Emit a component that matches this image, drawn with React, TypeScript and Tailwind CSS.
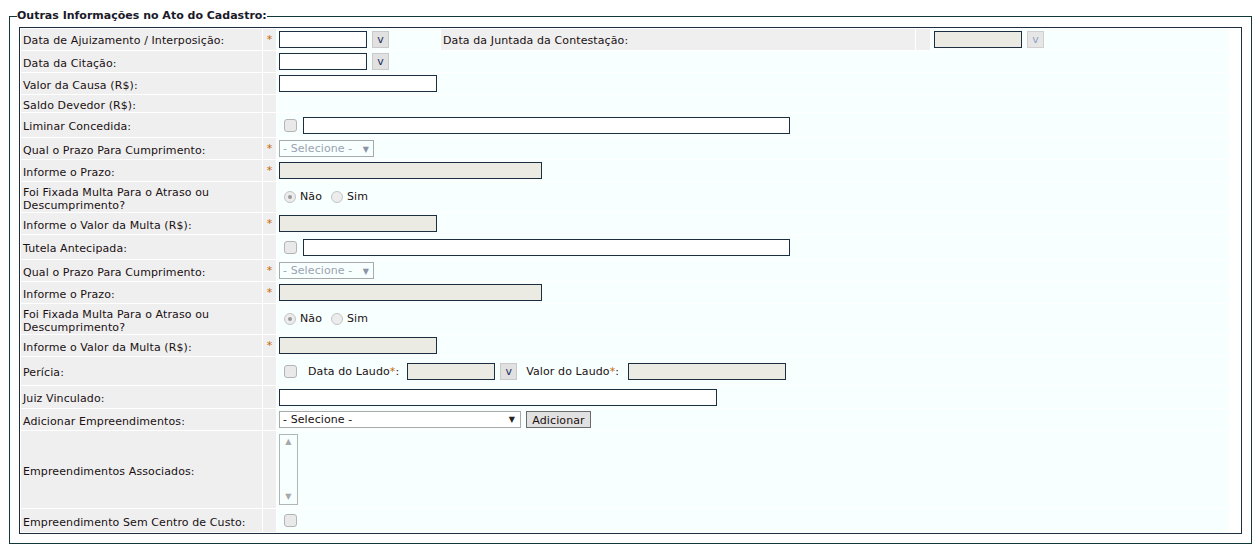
import React from 'react';

const LABEL_BG = 'bg-[#efeff0]';

function Star() {
  return <span className="text-[#c46a00] text-[11px] leading-none">*</span>;
}

function TextBox({ w, disabled }: { w: string; disabled?: boolean }) {
  return (
    <input
      readOnly
      disabled={disabled}
      className={`${w} h-[17px] border border-[#1c2e40] ${disabled ? 'bg-[#ebebe4]' : 'bg-white'} text-[11px] outline-none`}
    />
  );
}

function DateBtn({ disabled }: { disabled?: boolean }) {
  return (
    <button
      type="button"
      className={`ml-[5px] w-[17px] h-[17px] flex items-center justify-center border text-[11px] leading-none ${
        disabled ? 'bg-[#e6e6e6] border-[#d0d0d0] text-[#8fa4c4]' : 'bg-[#e1e1e1] border-[#c9c9c9] text-[#1c2e60]'
      }`}
    >
      v
    </button>
  );
}

function Check() {
  return <span className="block w-[13px] h-[13px] rounded-[3px] border border-[#b4b4b4] bg-[#e9e9e9]" />;
}

function Radio({ checked }: { checked?: boolean }) {
  return (
    <span className="w-[12px] h-[12px] rounded-full border border-[#c4c4c4] bg-[#ececec] flex items-center justify-center">
      {checked && <span className="w-[4px] h-[4px] rounded-full bg-[#9a9a9a]" />}
    </span>
  );
}

function DisabledSelect() {
  return (
    <div className="w-[95px] h-[17px] border border-[#a9a9a9] flex items-center justify-between pl-[3px] pr-[4px] pt-[2px] text-[#9aa3b0] text-[11px]">
      <span>- Selecione -</span>
      <span className="text-[8px] text-[#8a94a4]">▼</span>
    </div>
  );
}

function Row({
  h,
  label,
  req,
  children,
}: {
  h: string;
  label: React.ReactNode;
  req?: boolean;
  children?: React.ReactNode;
}) {
  return (
    <div className={`flex gap-px ${h}`}>
      <div className={`w-[241px] shrink-0 ${LABEL_BG} flex items-center pl-[2px] pt-[3px] leading-[13px]`}>{label}</div>
      <div className={`w-[13px] shrink-0 ${LABEL_BG} flex items-center justify-center`}>{req && <Star />}</div>
      <div className="flex-1 bg-[#f8ffff] flex items-center pl-[2px]">{children}</div>
    </div>
  );
}

function MultaRows() {
  return (
    <>
      <Row h="h-[21px]" label="Qual o Prazo Para Cumprimento:" req>
        <DisabledSelect />
      </Row>
      <Row h="h-[21px]" label="Informe o Prazo:" req>
        <TextBox w="w-[263px]" disabled />
      </Row>
      <Row
        h="h-[30px]"
        label={
          <span>
            Foi Fixada Multa Para o Atraso ou
            <br />
            Descumprimento?
          </span>
        }
      >
        <span className="ml-[5px] flex items-center">
          <Radio checked />
          <span className="ml-[4px]">Não</span>
          <span className="ml-[9px]">
            <Radio />
          </span>
          <span className="ml-[4px]">Sim</span>
        </span>
      </Row>
      <Row h="h-[21px]" label="Informe o Valor da Multa (R$):" req>
        <TextBox w="w-[158px]" disabled />
      </Row>
    </>
  );
}

export default function App() {
  return (
    <div className="bg-white min-h-[553px] pt-[9px] font-['DejaVu_Sans',Verdana,sans-serif] text-[11px] tracking-[0.1px] text-[#201010]">
      <fieldset className="ml-[9px] w-[1243px] border border-[#123838] px-[9px] pb-[9px]">
        <legend className="ml-[-2px] font-bold text-[11px] leading-[14px] tracking-normal text-[#1a1a2a]">
          Outras Informações no Ato do Cadastro:
        </legend>
        <div className="mt-[4px] border border-[#1c2e40] bg-white p-px pr-[12px] flex flex-col gap-px">
          {/* linha 1 */}
          <div className="flex gap-px h-[21px]">
            <div className={`w-[241px] shrink-0 ${LABEL_BG} flex items-center pl-[2px] pt-[3px]`}>
              Data de Ajuizamento / Interposição:
            </div>
            <div className={`w-[13px] shrink-0 ${LABEL_BG} flex items-center justify-center`}>
              <Star />
            </div>
            <div className="w-[163px] shrink-0 bg-[#f8ffff] flex items-center pl-[2px]">
              <TextBox w="w-[88px]" />
              <DateBtn />
            </div>
            <div className={`w-[474px] shrink-0 ${LABEL_BG} flex items-center pl-[2px] pt-[3px]`}>
              Data da Juntada da Contestação:
            </div>
            <div className={`w-[14px] shrink-0 ${LABEL_BG}`} />
            <div className="flex-1 bg-[#f8ffff] flex items-center pl-[3px]">
              <TextBox w="w-[88px]" disabled />
              <DateBtn disabled />
            </div>
          </div>

          <Row h="h-[21px]" label="Data da Citação:">
            <TextBox w="w-[88px]" />
            <DateBtn />
          </Row>
          <Row h="h-[21px]" label="Valor da Causa (R$):">
            <TextBox w="w-[158px]" />
          </Row>
          <Row h="h-[17px]" label="Saldo Devedor (R$):" />
          <Row h="h-[24px]" label="Liminar Concedida:">
            <span className="ml-[5px]">
              <Check />
            </span>
            <span className="ml-[6px] flex">
              <TextBox w="w-[487px]" />
            </span>
          </Row>
          <MultaRows />
          <Row h="h-[24px]" label="Tutela Antecipada:">
            <span className="ml-[5px]">
              <Check />
            </span>
            <span className="ml-[6px] flex">
              <TextBox w="w-[487px]" />
            </span>
          </Row>
          <MultaRows />
          <Row h="h-[28px]" label="Perícia:">
            <span className="ml-[5px]">
              <Check />
            </span>
            <span className="ml-[11px] pt-[2px]">
              Data do Laudo<Star />:
            </span>
            <span className="ml-[8px] flex items-center">
              <TextBox w="w-[88px]" disabled />
              <DateBtn />
            </span>
            <span className="ml-[9px] pt-[2px]">
              Valor do Laudo<Star />:
            </span>
            <span className="ml-[9px] flex">
              <TextBox w="w-[158px]" disabled />
            </span>
          </Row>
          <Row h="h-[22px]" label="Juiz Vinculado:">
            <TextBox w="w-[438px]" />
          </Row>
          <Row h="h-[21px]" label="Adicionar Empreendimentos:">
            <div className="w-[242px] h-[17px] border border-[#a9a9a9] bg-white flex items-center justify-between pl-[3px] pr-[5px] pt-[1px] text-[#201010]">
              <span>- Selecione -</span>
              <span className="text-[8px] text-[#222]">▼</span>
            </div>
            <button
              type="button"
              className="ml-[5px] w-[65px] h-[17px] border border-[#6b6b6b] bg-[#e1e1e1] text-[11px] leading-none flex items-center justify-center pt-[1px] text-[#201010]"
            >
              Adicionar
            </button>
          </Row>
          <Row h="h-[77px]" label="Empreendimentos Associados:">
            <div className="w-[19px] h-[71px] border border-[#b4b4b4] bg-[#f8ffff] flex flex-col items-center justify-between py-[3px] text-[8px] text-[#a8a8a8] leading-none">
              <span>▲</span>
              <span>▼</span>
            </div>
          </Row>
          <Row h="h-[23px]" label="Empreendimento Sem Centro de Custo:">
            <span className="ml-[5px]">
              <Check />
            </span>
          </Row>
        </div>
      </fieldset>
    </div>
  );
}
